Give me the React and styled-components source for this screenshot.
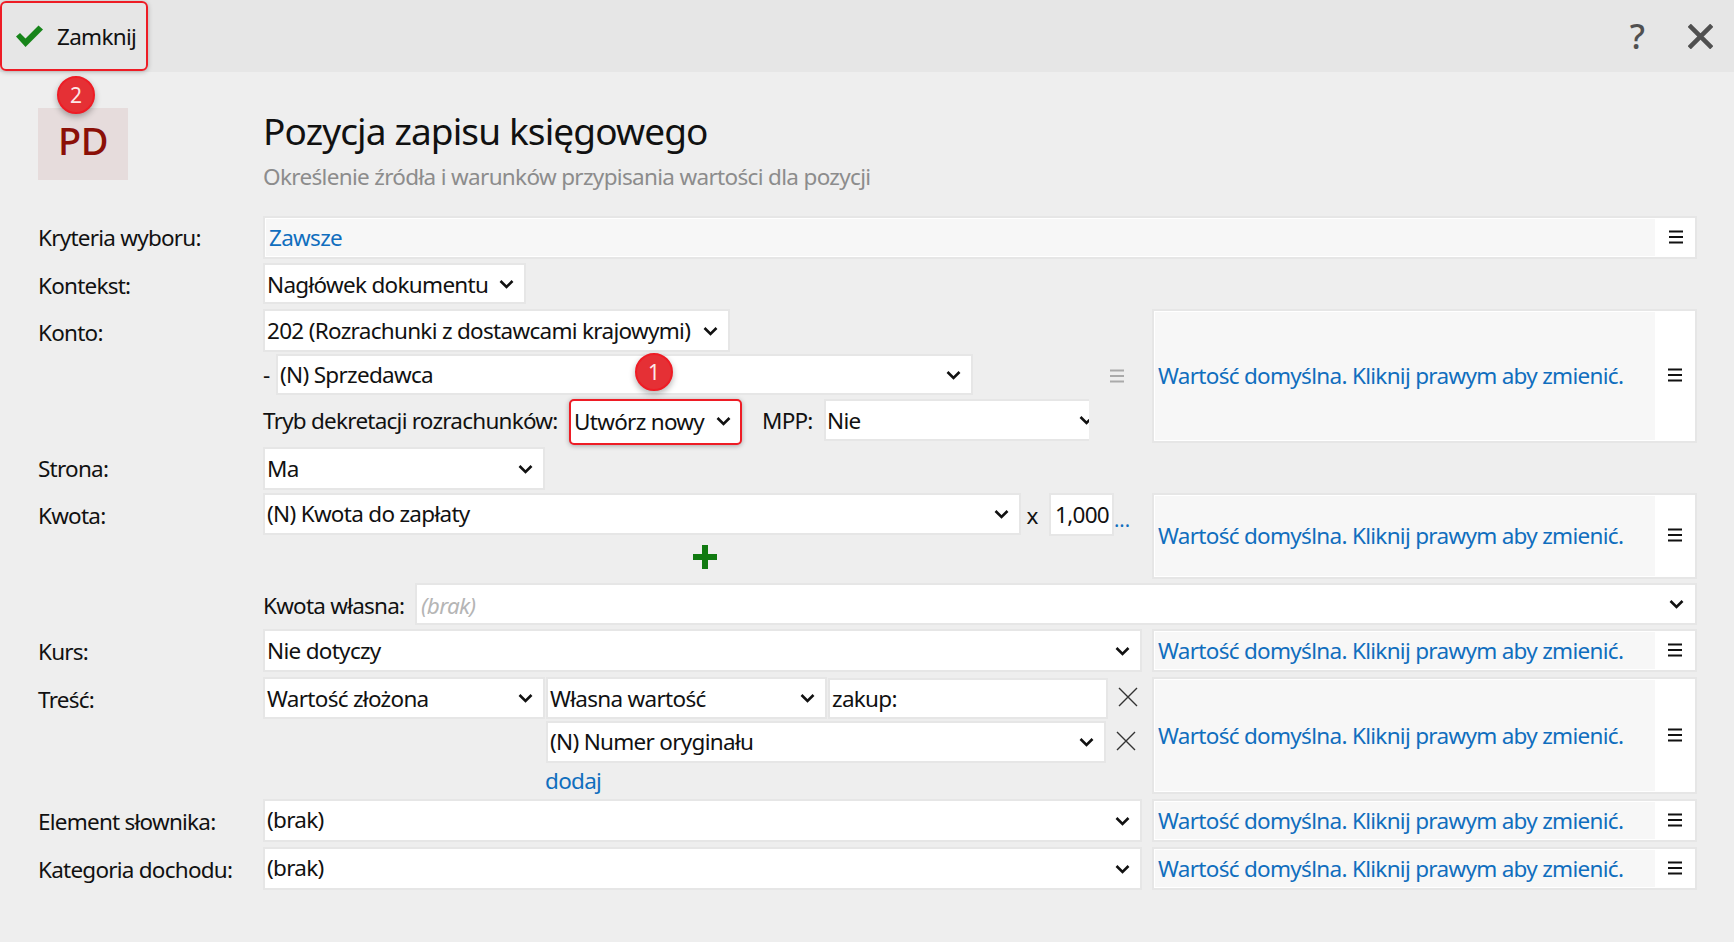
import React from "react";
import styled, { createGlobalStyle } from "styled-components";

const Global = createGlobalStyle`
  html, body { margin: 0; padding: 0; background: #eeeeee; }
  body { font-family: "Noto Sans", "Open Sans", sans-serif; color: #111; }
`;

const FONT = 22.5;
const BLUE = "#106ebe";

const Page = styled.div`
  position: relative;
  width: 1734px;
  height: 942px;
  overflow: hidden;
  background: #eeeeee;
  font-size: ${FONT}px;
  letter-spacing: -0.7px;
`;

const Header = styled.header`
  height: 72px;
  background: #e6e6e6;
  display: flex;
  align-items: center;
  justify-content: space-between;
  box-sizing: border-box;
  padding: 0 21px 0 0;
`;

const CloseButton = styled.div`
  box-sizing: border-box;
  width: 148px;
  height: 70px;
  border: 2px solid #ee1c25;
  border-radius: 6px;
  box-shadow: 0 1px 5px rgba(0, 0, 0, 0.25);
  display: flex;
  align-items: center;
  gap: 14px;
  padding: 0 0 0 13px;
`;

const HeaderTools = styled.div`
  display: flex;
  align-items: center;
  gap: 43px;
`;

const Help = styled.span`
  font-size: 34px;
  line-height: 1;
  font-weight: 500;
  color: #505050;
  letter-spacing: 0;
`;

const Intro = styled.section`
  display: grid;
  grid-template-columns: 226px 1fr;
  margin: 36px 0 0 38px;
  height: 108px;
`;

const Logo = styled.div`
  width: 90px;
  height: 72px;
  box-sizing: border-box;
  background: #e6dcdc;
  color: #8b1008;
  font-size: 38px;
  font-weight: 500;
  letter-spacing: -0.4px;
  display: flex;
  align-items: center;
  justify-content: center;
  padding-bottom: 8px;
`;

const Titles = styled.div`
  display: flex;
  flex-direction: column;
  margin-left: -1px;
`;

const Title = styled.h1`
  margin: 0;
  font-weight: 400;
  font-size: 37px;
  line-height: 46px;
  color: #111;
  letter-spacing: -0.87px;
`;

const Subtitle = styled.p`
  margin: 8px 0 0;
  font-size: 22.5px;
  line-height: 30px;
  color: #8c8c8c;
  letter-spacing: -0.67px;
`;

const Form = styled.div`
  display: flex;
  flex-direction: column;
  margin-left: 37px;
  width: 1660px;
`;

const Row = styled.div`
  display: grid;
  grid-template-columns: 226px 889px 545px;
  grid-template-rows: ${(p) => p.$h}px;
  margin-top: ${(p) => p.$top || 0}px;
`;

const WideRow = styled.div`
  display: flex;
  align-items: center;
  padding-left: 226px;
  height: 42px;
  margin-top: ${(p) => p.$top || 0}px;
`;

const Label = styled.div`
  line-height: 32px;
  letter-spacing: -0.76px;
  padding: ${(p) => p.$pt || 0}px 0 0 1px;
`;

const InlineLabel = styled.span`
  box-sizing: border-box;
  width: ${(p) => p.$w}px;
  flex: none;
  white-space: nowrap;
  letter-spacing: -0.76px;
  margin-left: ${(p) => p.$ml || 0}px;
  padding: ${(p) => p.$pt || 0}px 0 ${(p) => p.$pb || 0}px;
`;

const Stack = styled.div`
  display: flex;
  flex-direction: column;
  align-items: flex-start;
  gap: ${(p) => p.$gap || 0}px;
`;

const Line = styled.div`
  display: flex;
  align-items: center;
  height: ${(p) => p.$h || 42}px;
  margin-top: ${(p) => p.$top || 0}px;
`;

const Field = styled.div`
  position: relative;
  box-sizing: border-box;
  width: ${(p) => p.$w}px;
  height: ${(p) => p.$h || 42}px;
  flex: none;
  background: #fff;
  border: 2px solid #e6e6e6;
  display: flex;
  align-items: center;
  justify-content: space-between;
  padding: 0 10px 0 2px;
  overflow: hidden;
  white-space: nowrap;
  margin-left: ${(p) => p.$ml || 0}px;
`;

const FieldText = styled.span`
  padding: ${(p) => p.$down || 0}px 0 ${(p) => p.$up || 0}px;
`;

const WideField = styled(Field)`
  padding-right: 11px;
`;

const ClippedField = styled(Field)`
  border-right: 0;
  padding-right: 0;
  margin-bottom: 4px;
  padding-left: 1px;
  svg {
    margin-right: -5px;
  }
`;

const Marked = styled(Field)`
  border-color: #ee1c25;
  border-radius: 5px;
  box-shadow: 0 1px 5px rgba(0, 0, 0, 0.3);
  padding: 0 9px 2px 3px;
`;

const Placeholder = styled.span`
  color: #b5b5b5;
  font-style: italic;
  padding: 2px 0 0 2px;
`;

const Dash = styled.span`
  width: 13px;
  flex: none;
`;

const Link = styled.span`
  color: ${BLUE};
  white-space: nowrap;
`;

const NumberField = styled(Field)`
  justify-content: flex-end;
  padding: 0 3px 0 0;
`;

const Times = styled.span`
  box-sizing: border-box;
  width: 28px;
  padding: 2px 6px 0 0;
  text-align: center;
  flex: none;
`;

const More = styled.span`
  color: ${BLUE};
  font-size: 20px;
  letter-spacing: 0;
  padding-top: 10px;
`;

const RemoveCell = styled.span`
  width: 40px;
  flex: none;
  display: flex;
  justify-content: center;
  margin-top: ${(p) => p.$top || 0}px;
`;

const PlusCell = styled.div`
  display: flex;
  width: 883px;
  justify-content: center;
  padding-top: 10px;
`;

const AddLink = styled(Link)`
  display: block;
  margin: 0 0 0 282px;
  line-height: 32px;
`;

const ValueBox = styled.div`
  box-sizing: border-box;
  background: #fff;
  border: 2px solid #e6e6e6;
  display: flex;
  height: 100%;
`;

const ValueText = styled.div`
  flex: 1;
  background: #f7f7f7;
  margin: 1px 0 1px 1px;
  padding: 0 0 1px 3px;
  display: flex;
  align-items: center;
  color: ${BLUE};
  white-space: nowrap;
`;

const MenuCell = styled.div`
  width: 40px;
  flex: none;
  display: flex;
  align-items: center;
  justify-content: center;
  padding-bottom: 2px;
`;

const CriteriaBox = styled(ValueBox)`
  height: 43px;
  grid-column: 2 / 4;
`;

const CriteriaText = styled(ValueText)`
  padding-left: 3px;
`;

const CriteriaMenu = styled(MenuCell)`
  padding-left: 2px;
  box-sizing: border-box;
`;

const GrayMenu = styled.span`
  position: absolute;
  left: 1110px;
  top: 369px;
  line-height: 0;
`;

const Badge = styled.div`
  position: absolute;
  left: ${(p) => p.$x - 19}px;
  top: ${(p) => p.$y - 19}px;
  width: 38px;
  height: 38px;
  box-sizing: border-box;
  border-radius: 50%;
  background: #e53035;
  border: 2px solid #ee1c25;
  box-shadow: 0 3px 6px rgba(0, 0, 0, 0.3);
  color: #fde8e8;
  font-size: 21px;
  letter-spacing: 0;
  display: flex;
  align-items: center;
  justify-content: center;
  line-height: 1;
`;

const Chevron = () => (
  <svg width="15" height="10" viewBox="0 0 15 10" style={{ flex: "none" }}>
    <path d="M1.5 2 L7.5 8 L13.5 2" fill="none" stroke="#111" strokeWidth="2.6" />
  </svg>
);

const Menu = ({ color = "#111" }) => (
  <svg width="14" height="14" viewBox="0 0 14 14">
    <path d="M0 1.5H14M0 7H14M0 12.5H14" stroke={color} strokeWidth="2" />
  </svg>
);

const Cross = ({ size = 20, width = 1.4, color = "#333" }) => (
  <svg width={size} height={size} viewBox="0 0 20 20">
    <path d="M1 1L19 19M19 1L1 19" stroke={color} strokeWidth={width} fill="none" />
  </svg>
);

const Check = () => (
  <svg width="28" height="22" viewBox="0 0 28 22">
    <path d="M1 11.5 L5 8 L10.5 13.5 L23.5 0.5 L28 4.5 L10.5 22 Z" fill="#17851a" />
  </svg>
);

const Plus = () => (
  <svg width="24" height="24" viewBox="0 0 24 24">
    <path d="M9 0H15V9H24V15H15V24H9V15H0V9H9Z" fill="#117a11" />
  </svg>
);

const Select = ({ w, h, ml, up, down, children }) => (
  <Field $w={w} $h={h} $ml={ml}>
    <FieldText $up={up} $down={down}>{children}</FieldText>
    <Chevron />
  </Field>
);

const DefaultValue = () => (
  <ValueBox>
    <ValueText>Wartość domyślna. Kliknij prawym aby zmienić.</ValueText>
    <MenuCell>
      <Menu />
    </MenuCell>
  </ValueBox>
);

export default function App() {
  return (
    <Page>
      <Global />
      <Header>
        <CloseButton>
          <Check />
          <span>Zamknij</span>
        </CloseButton>
        <HeaderTools>
          <Help>?</Help>
          <Cross size={25} width={3.6} color="#505050" />
        </HeaderTools>
      </Header>

      <Intro>
        <Logo>PD</Logo>
        <Titles>
          <Title>Pozycja zapisu księgowego</Title>
          <Subtitle>Określenie źródła i warunków przypisania wartości dla pozycji</Subtitle>
        </Titles>
      </Intro>

      <Form>
        <Row $h={43}>
          <Label $pt={6}>Kryteria wyboru:</Label>
          <CriteriaBox>
            <CriteriaText>Zawsze</CriteriaText>
            <CriteriaMenu>
              <Menu />
            </CriteriaMenu>
          </CriteriaBox>
        </Row>

        <Row $h={41} $top={4}>
          <Label $pt={7}>Kontekst:</Label>
          <Select w={263} h={41} down={2}>Nagłówek dokumentu</Select>
        </Row>

        <Row $h={134} $top={5}>
          <Label $pt={8}>Konto:</Label>
          <Stack $gap={2}>
            <Select w={467} h={43}>202 (Rozrachunki z dostawcami krajowymi)</Select>
            <Line $h={41}>
              <Dash>-</Dash>
              <Select w={697} h={41}>(N) Sprzedawca</Select>
            </Line>
            <Line $h={46} $top={2}>
              <InlineLabel $w={306} $pb={3}>Tryb dekretacji rozrachunków:</InlineLabel>
              <Marked $w={173} $h={46}>
                <span>Utwórz nowy</span>
                <Chevron />
              </Marked>
              <InlineLabel $w={62} $ml={20} $pb={3}>MPP:</InlineLabel>
              <ClippedField $w={265} $h={42}>
                <span>Nie</span>
                <Chevron />
              </ClippedField>
            </Line>
          </Stack>
          <DefaultValue />
        </Row>

        <Row $h={43} $top={4}>
          <Label $pt={6}>Strona:</Label>
          <Select w={282} h={43}>Ma</Select>
        </Row>

        <Row $h={86} $top={3}>
          <Label $pt={7}>Kwota:</Label>
          <Stack>
            <Line $h={42}>
              <Select w={758} h={42} up={2}>(N) Kwota do zapłaty</Select>
              <Times>x</Times>
              <NumberField $w={65} $h={43}>1,000</NumberField>
              <More>...</More>
            </Line>
            <PlusCell>
              <Plus />
            </PlusCell>
          </Stack>
          <DefaultValue />
        </Row>

        <WideRow $top={4}>
          <InlineLabel $w={152} $pt={3}>Kwota własna:</InlineLabel>
          <WideField $w={1282} $h={42}>
            <Placeholder>(brak)</Placeholder>
            <Chevron />
          </WideField>
        </WideRow>

        <Row $h={43} $top={4}>
          <Label $pt={7}>Kurs:</Label>
          <Select w={879} h={43}>Nie dotyczy</Select>
          <DefaultValue />
        </Row>

        <Row $h={117} $top={5}>
          <Label $pt={7}>Treść:</Label>
          <Stack $gap={2}>
            <Line $h={42}>
              <Select w={282} h={42}>Wartość złożona</Select>
              <Select w={281} h={42} ml={1}>Własna wartość</Select>
              <Field $w={280} $h={41} $ml={1}>zakup:</Field>
              <RemoveCell $top={-3}>
                <Cross />
              </RemoveCell>
            </Line>
            <Line $h={42}>
              <Select w={560} h={42} ml={283} up={2}>(N) Numer oryginału</Select>
              <RemoveCell $top={-2}>
                <Cross />
              </RemoveCell>
            </Line>
            <AddLink>dodaj</AddLink>
          </Stack>
          <DefaultValue />
        </Row>

        <Row $h={43} $top={5}>
          <Label $pt={7}>Element słownika:</Label>
          <Select w={879} h={43} up={2}>(brak)</Select>
          <DefaultValue />
        </Row>

        <Row $h={43} $top={5}>
          <Label $pt={7}>Kategoria dochodu:</Label>
          <Select w={879} h={43} up={2}>(brak)</Select>
          <DefaultValue />
        </Row>
      </Form>

      <GrayMenu>
        <Menu color="#aaaaaa" />
      </GrayMenu>
      <Badge $x={76} $y={95}>2</Badge>
      <Badge $x={654} $y={372}>1</Badge>
    </Page>
  );
}
